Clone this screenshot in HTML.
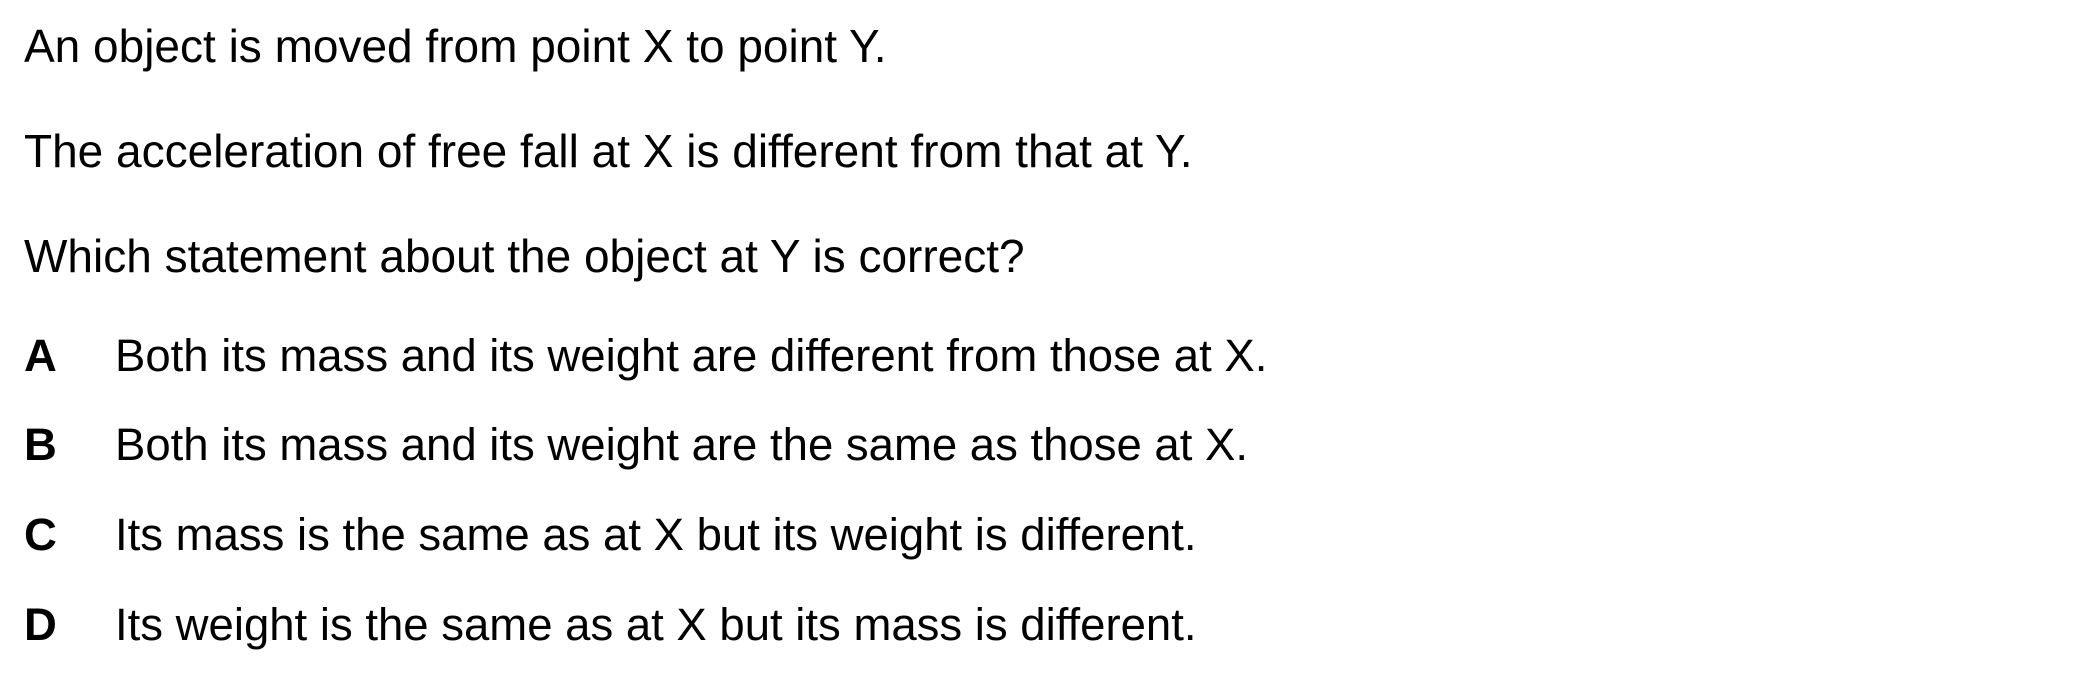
<!DOCTYPE html>
<html><head><style>
html,body{margin:0;padding:0;background:#fff;}
body{width:2099px;height:695px;position:relative;overflow:hidden;font-family:"Liberation Sans",Arial,sans-serif;font-size:45.5px;color:#000;}
.l{position:absolute;line-height:1;white-space:nowrap;}
.q{font-size:46px;}
.b{font-weight:bold;}
</style></head><body>
<div class="l q" style="left:24px;top:23px">An object is moved from point X to point Y.</div>
<div class="l q" style="left:24px;top:128px">The acceleration of free fall at X is different from that at Y.</div>
<div class="l q" style="left:24px;top:233px">Which statement about the object at Y is correct?</div>
<div class="l b" style="left:24px;top:333px">A</div>
<div class="l" style="left:115px;top:333px">Both its mass and its weight are different from those at X.</div>
<div class="l b" style="left:24px;top:422px">B</div>
<div class="l" style="left:115px;top:422px">Both its mass and its weight are the same as those at X.</div>
<div class="l b" style="left:24px;top:512px">C</div>
<div class="l" style="left:115px;top:512px">Its mass is the same as at X but its weight is different.</div>
<div class="l b" style="left:24px;top:602px">D</div>
<div class="l" style="left:115px;top:602px">Its weight is the same as at X but its mass is different.</div>
</body></html>
